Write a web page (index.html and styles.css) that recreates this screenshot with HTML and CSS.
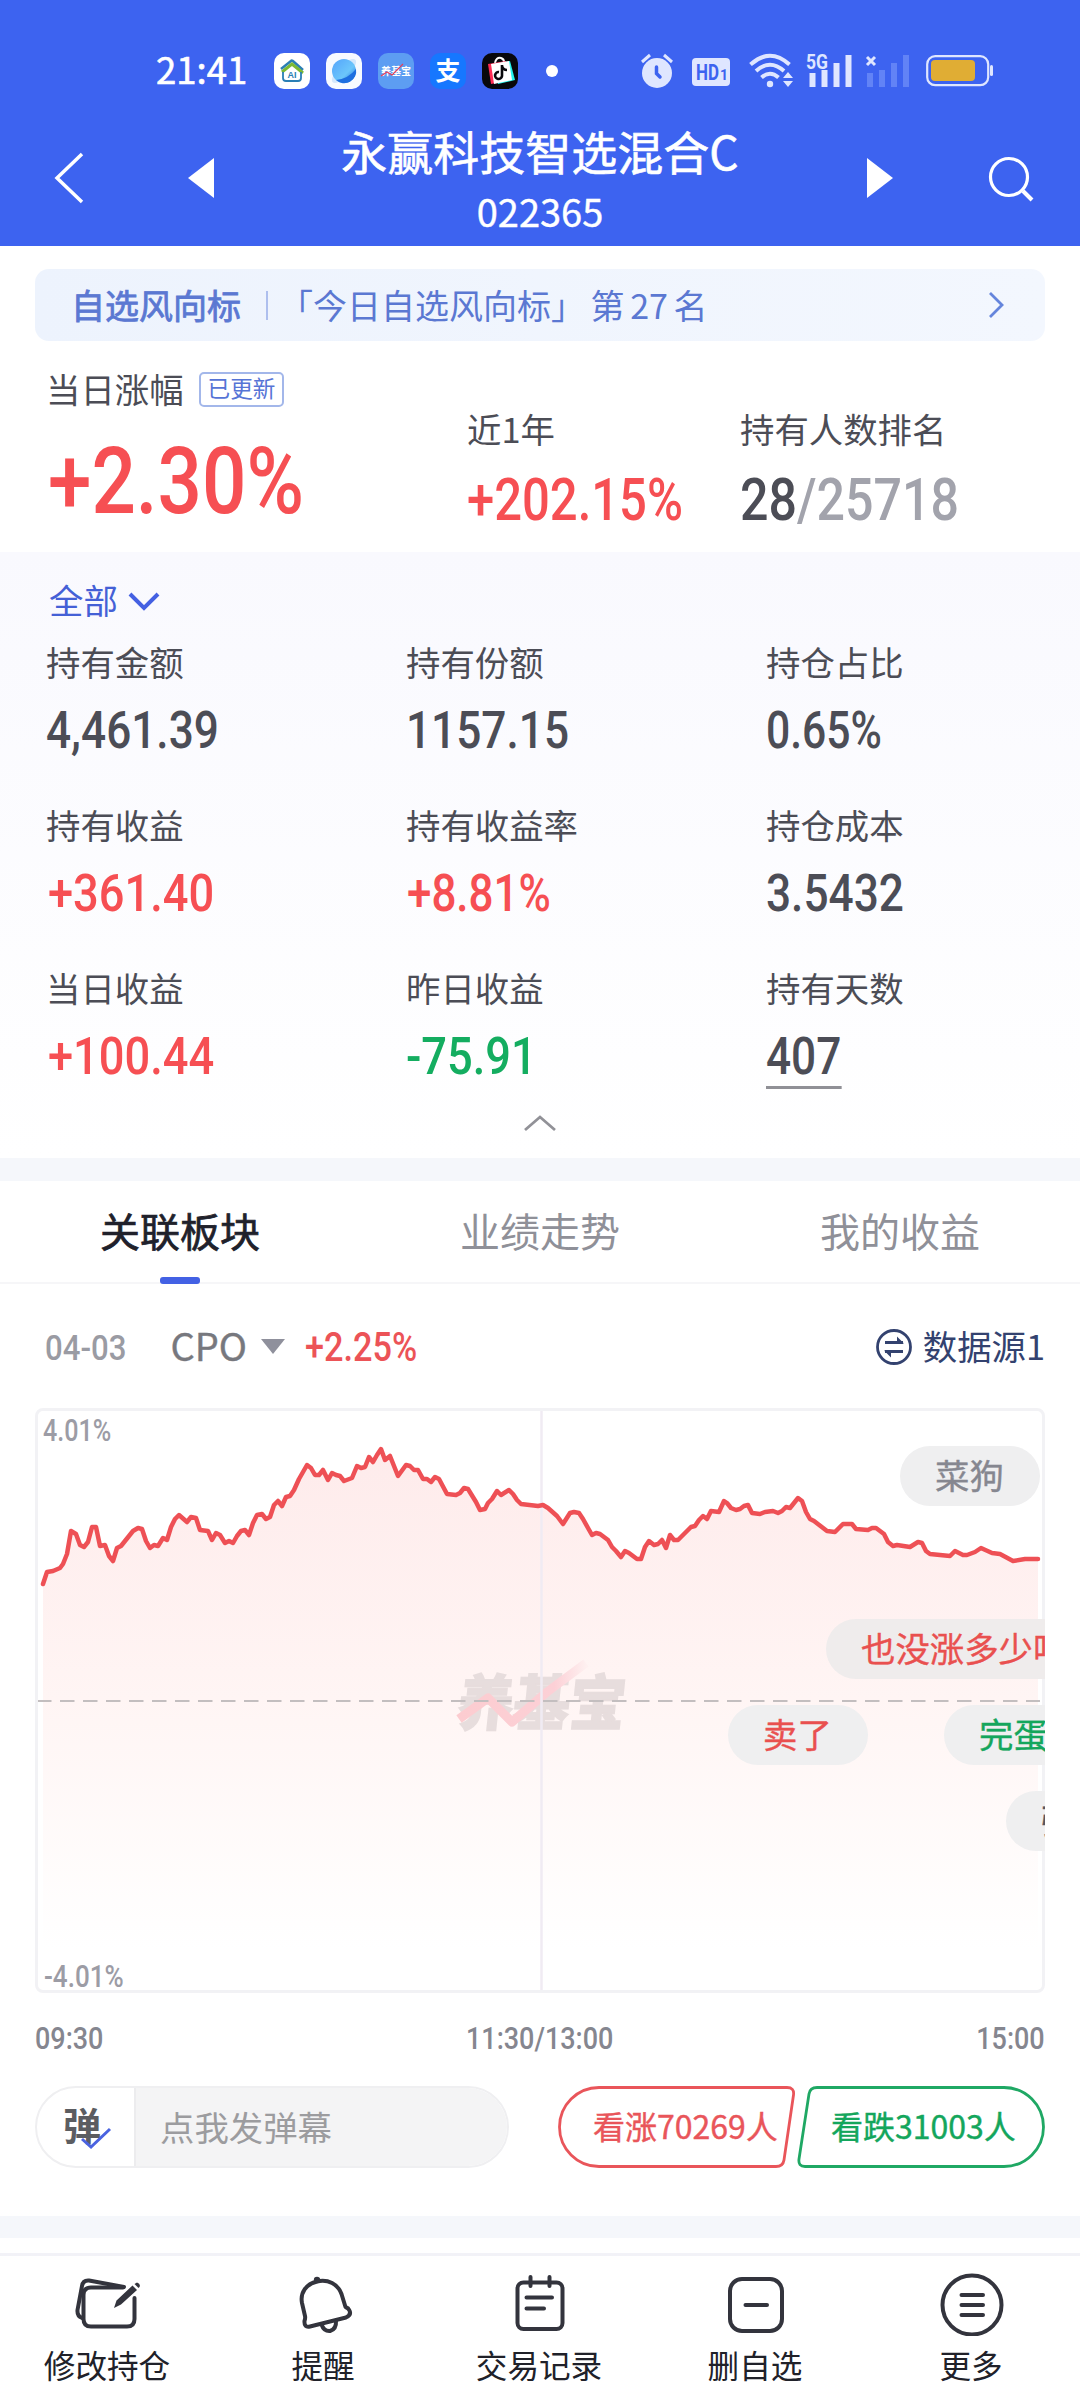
FILE: index.html
```html
<!DOCTYPE html>
<html lang="zh-CN">
<head>
  <meta charset="UTF-8" />
  <meta name="viewport" content="width=device-width, initial-scale=1.0"/>
  <title>永赢科技智选混合C</title>
  <link rel="stylesheet" href="styles.css">
</head>
<body>

  <!-- Header -->
  <header class="header">
    <div class="status-bar">
      <span class="clock">21:41</span>
      <div class="apps">
        <svg width="36" height="36" viewBox="0 0 36 36">
          <rect width="36" height="36" rx="10" fill="#fff"/>
          <path d="M7 16 L17 8 Q18 7 20 9 L29 17" fill="none" stroke="#2b7fb5" stroke-width="2.5"/>
          <path d="M8 19 L18 11 L29 20" fill="none" stroke="#7ab935" stroke-width="3"/>
          <path d="M9 19 V25 Q9 28 12 28 H24 Q27 28 27 25 V19" fill="none" stroke="#2b7fb5" stroke-width="1.8"/>
          <text x="18" y="25" class="app-ai">AI</text>
        </svg>
        <svg width="36" height="36" viewBox="0 0 36 36">
          <defs>
            <linearGradient id="globe" x1="0" y1="0" x2="1" y2="1">
              <stop offset="0" stop-color="#54a4fb"/>
              <stop offset=".6" stop-color="#6cc6fb"/>
              <stop offset="1" stop-color="#1563d8"/>
            </linearGradient>
          </defs>
          <rect width="36" height="36" rx="10" fill="#f7faff"/>
          <ellipse cx="18" cy="18" rx="16" ry="6" fill="#d3e7fc" transform="rotate(-45 18 18)"/>
          <circle cx="18" cy="18" r="12" fill="url(#globe)"/>
          <path d="M30 16 A12 12 0 0 1 10 27 Q22 26 30 16Z" fill="#1d6ee0"/>
        </svg>
        <svg width="36" height="36" viewBox="0 0 36 36">
          <rect width="36" height="36" rx="10" fill="#5d9df2"/>
          <text x="18" y="22" class="app-yjb">养基宝</text>
          <path d="M3 23 L9 19 L14 22 L25 11" fill="none" stroke="#e5405c" stroke-width="1.2"/>
        </svg>
        <svg width="36" height="36" viewBox="0 0 36 36">
          <rect width="36" height="36" rx="10" fill="#1677ff"/>
          <text x="18" y="27" class="app-zfb">支</text>
        </svg>
        <svg width="36" height="36" viewBox="0 0 36 36">
          <rect width="36" height="36" rx="10" fill="#08080c"/>
          <path d="M13 10 Q14 4 19 5 Q22 6 22 9" fill="none" stroke="#fff" stroke-width="2"/>
          <path d="M6 11 L24 8 L25 28 L9 31Z" fill="#fe2c55"/>
          <path d="M13 11 L28 8 L33 27 L16 31Z" fill="#25f4ee"/>
          <path d="M9 11 L27 8 L30 27 L12 31Z" fill="#fff"/>
          <path d="M20 12 V23 a3.5 3.5 0 1 1 -3 -4 M20 13 Q21 17 25 17" fill="none" stroke="#08080c" stroke-width="2.6"/>
        </svg>
      </div>
      <span class="dot"></span>

      <div class="signals">
        <!-- alarm -->
        <svg width="34" height="36" viewBox="0 0 34 36">
          <circle cx="17" cy="20" r="15" fill="#dfe6ff"/>
          <path d="M2 9 L10 2 M32 9 L24 2" stroke="#dfe6ff" stroke-width="3"/>
          <path d="M16.500 14 V20.500 L20 24" fill="none" stroke="#3d63f0" stroke-width="3.500" stroke-linecap="round"/>
        </svg>
        <!-- hd -->
        <svg class="hd" width="40" height="36" viewBox="0 0 40 36">
          <rect x="1" y="5" width="38" height="28" rx="4" fill="#dfe6ff"/>
          <text x="5" y="27" textLength="23" lengthAdjust="spacingAndGlyphs" class="hd-text">HD<tspan class="hd-num"></tspan></text>
          <text x="29" y="27" class="hd-num">1</text>
        </svg>
        <!-- wifi -->
        <svg class="wifi" width="46" height="36" viewBox="0 0 46 36">
          <g fill="none" stroke="#dfe6ff" stroke-width="4">
            <path d="M1.500 11.500 Q21 -6 40.500 11.500"/>
            <path d="M7 18 Q21 5.500 35 18"/>
            <path d="M12.500 24.500 Q21 17 29.500 24.500"/>
          </g>
          <circle cx="21" cy="31" r="3.200" fill="#dfe6ff"/>
          <path d="M34 25 h10 l-5 -6z M34 28 h10 l-5 6z" fill="#dfe6ff"/>
        </svg>
        <!-- 5g -->
        <svg class="sim" width="48" height="36" viewBox="0 0 48 36">
          <text x="0" y="15.500" textLength="22" lengthAdjust="spacingAndGlyphs" class="net">5G</text>
          <path d="M6.500 23 V31 M18.500 20 V31 M30.500 13 V31 M42.500 5 V31" stroke="#dfe6ff" stroke-width="6" stroke-linecap="square"/>
        </svg>
        <!-- empty sim -->
        <svg class="sim-off" width="46" height="36" viewBox="0 0 46 36">
          <path d="M2 4 L10 12 M10 4 L2 12" stroke="#dfe6ff" stroke-width="3"/>
          <path d="M5 23 V31 M17 20 V31 M29 13 V31 M41 5 V31" stroke="#6283f6" stroke-width="6" stroke-linecap="square"/>
        </svg>
        <!-- battery -->
        <svg class="battery" width="68" height="36" viewBox="0 0 68 36">
          <rect x="1.200" y="3.200" width="61" height="29" rx="8" fill="none" stroke="#dfe6ff" stroke-width="2.200"/>
          <rect x="5" y="7" width="44" height="21" rx="4" fill="#e0ad34"/>
          <rect x="64" y="12" width="3" height="11" rx="1.500" fill="#dfe6ff"/>
        </svg>
      </div>
    </div>

    <div class="title-bar">
      <svg class="back" width="40" height="56" viewBox="0 0 40 56" fill="none" stroke="#fff" stroke-width="3.500">
        <path d="M32 4 L7 28 L32 52"/>
      </svg>
      <svg class="prev" width="30" height="44" viewBox="0 0 30 44"><path d="M28 2 V42 L2 22Z" fill="#fff"/></svg>
      <div class="title">
        <h1>永赢科技智选混合C</h1>
        <p>022365</p>
      </div>
      <svg class="next" width="30" height="44" viewBox="0 0 30 44"><path d="M2 2 V42 L28 22Z" fill="#fff"/></svg>
      <svg class="search" width="48" height="48" viewBox="0 0 48 48" fill="none" stroke="#fff" stroke-width="3.200">
        <circle cx="22" cy="22" r="18.500"/>
        <path d="M36 36 L45 45" stroke-width="4"/>
      </svg>
    </div>
  </header>

  <!-- Overview -->
  <section class="overview">
    <div class="banner">
      <span class="banner-name">自选风向标</span>
      <span class="banner-line"></span>
      <span class="banner-text">「今日自选风向标」 第 27 名</span>
      <svg width="18" height="30" viewBox="0 0 18 30" fill="none" stroke="#6585dc" stroke-width="2.800"><path d="M2 3 L14 15 L2 27"/></svg>
    </div>
    <div class="summary">
      <div class="summary-item">
        <div class="label">当日涨幅 <span class="badge">已更新</span></div>
        <div class="num num-big up">+2.30%</div>
      </div>
      <div class="summary-item low">
        <div class="label">近1年</div>
        <div class="num num-mid up">+202.15%</div>
      </div>
      <div class="summary-item low">
        <div class="label">持有人数排名</div>
        <div class="num num-mid rank">28<span>/25718</span></div>
      </div>
    </div>
  </section>

  <!-- Holdings -->
  <section class="holdings">
    <div class="filter">全部
      <svg width="32" height="20" viewBox="0 0 32 20" fill="none" stroke="#4460e2" stroke-width="4"><path d="M2 2 L16 16 L30 2"/></svg>
    </div>
    <div class="grid">
      <div><div class="label">持有金额</div><div class="num">4,461.39</div></div>
      <div><div class="label">持有份额</div><div class="num">1157.15</div></div>
      <div><div class="label">持仓占比</div><div class="num num-pct">0.65%</div></div>
      <div><div class="label">持有收益</div><div class="num up">+361.40</div></div>
      <div><div class="label">持有收益率</div><div class="num num-pct up">+8.81%</div></div>
      <div><div class="label">持仓成本</div><div class="num">3.5432</div></div>
      <div><div class="label">当日收益</div><div class="num up">+100.44</div></div>
      <div><div class="label">昨日收益</div><div class="num down">-75.91</div></div>
      <div><div class="label">持有天数</div><div class="num days">407</div></div>
    </div>
    <svg class="fold" width="34" height="20" viewBox="0 0 34 20" fill="none" stroke="#919197" stroke-width="2.800"><path d="M2 17 L17 4 L32 17"/></svg>
  </section>

  <div class="divider"></div>

  <!-- Tabs -->
  <nav class="tabs">
    <div class="tab active">关联板块</div>
    <div class="tab">业绩走势</div>
    <div class="tab">我的收益</div>
  </nav>

  <!-- Sector chart -->
  <section class="sector">
    <div class="sector-head">
      <span class="date">04-03</span>
      <span class="sector-name">CPO</span>
      <span class="caret"></span>
      <span class="sector-rate">+2.25%</span>
      <span class="source">
        <svg width="38" height="38" viewBox="0 0 38 38" fill="none" stroke="#33426f" stroke-width="2.800">
          <circle cx="19" cy="19" r="16.500"/>
          <path d="M10 14.500 H28 M10 23.500 H28" />
          <path d="M22 8.500 L29 15.500 H22Z M16 29.500 L9 22.500 H16Z" fill="#33426f" stroke="none"/>
        </svg>
        数据源1
      </span>
    </div>

    <div class="chart">
      <svg class="plot" width="1010" height="585" viewBox="0 0 1010 585">
        <defs>
          <linearGradient id="area" gradientUnits="userSpaceOnUse" x1="0" y1="40" x2="0" y2="540">
            <stop offset="0" stop-color="#feebeb"/>
            <stop offset=".5" stop-color="#fff5f4"/>
            <stop offset="1" stop-color="#ffffff"/>
          </linearGradient>
          <linearGradient id="trend" gradientUnits="userSpaceOnUse" x1="424" y1="0" x2="551" y2="0">
            <stop offset="0" stop-color="#fcccd0"/>
            <stop offset=".75" stop-color="#fcd0d6"/>
            <stop offset="1" stop-color="#fef0f0"/>
          </linearGradient>
        </defs>
        <polygon id="area-shape" fill="url(#area)"/>
        <text x="422" y="317" textLength="168" lengthAdjust="spacingAndGlyphs" transform="translate(32 0) skewX(-6)" class="watermark">养基宝</text>
        <path d="M424 311 L453 290 L477 314 L512 284 L551 255" fill="none" stroke="url(#trend)" stroke-width="9" stroke-linejoin="round"/>
        <path d="M506.500 0 V585" stroke="#f0ebf3" stroke-width="2.500"/>
        <path d="M2 293 H1005" stroke="#c3bebf" stroke-width="2" stroke-dasharray="14.500 8.500"/>
        <polyline id="line-shape" fill="none" stroke="#ee5055" stroke-width="4.500" stroke-linejoin="round" stroke-linecap="round"/>
      </svg>
      <div class="frame"></div>
      <span class="axis axis-top">4.01%</span>
      <span class="axis axis-bottom">-4.01%</span>
      <span class="bullet bullet-1">菜狗</span>
      <span class="bullet bullet-2">也没涨多少吧</span>
      <span class="bullet bullet-3">卖了</span>
      <span class="bullet bullet-4">完蛋了</span>
      <span class="bullet bullet-5">强</span>
    </div>

    <div class="times">
      <span>09:30</span>
      <span>11:30/13:00</span>
      <span>15:00</span>
    </div>

    <div class="actions">
      <div class="comment">
        <div class="comment-toggle">弹
          <svg width="32" height="24" viewBox="0 0 32 24" fill="none" stroke="#4a63e0" stroke-width="3"><path d="M2 12 L11 20 L30 2"/></svg>
        </div>
        <div class="comment-input">点我发弹幕</div>
      </div>
      <div class="vote vote-up">
        <svg width="239" height="82" viewBox="0 0 239 82" fill="none" stroke="#e9555a" stroke-width="2.800"><path d="M41 1.500 H229 Q236.500 1.500 235.500 9 L226 74 Q225 80.500 218 80.500 H41 A39.500 39.500 0 0 1 41 1.500Z"/></svg>
        <span>看涨70269人</span>
      </div>
      <div class="vote vote-down">
        <svg width="248" height="82" viewBox="0 0 248 82" fill="none" stroke="#1fa864" stroke-width="2.800"><path d="M207 1.500 H20 Q13 1.500 12 8 L2 73 Q1 80.500 8 80.500 H207 A39.500 39.500 0 0 0 207 1.500Z"/></svg>
        <span>看跌31003人</span>
      </div>
    </div>
  </section>

  <div class="divider divider-bottom"></div>

  <!-- Bottom toolbar -->
  <nav class="toolbar">
    <div class="tool">
      <svg width="70" height="64" viewBox="0 0 70 64">
        <path d="M50 15.500 H18 Q10.500 15.500 10.500 23 V47 Q10.500 54.500 18 54.500 H54 Q61.500 54.500 61.500 47 V26"/>
        <path d="M51 15 L16 8.500 Q10 8 9 14 L4.500 38 Q4 44 9 46"/>
        <path d="M41 36 L43.500 28.500 L59.500 13.500 L64 18 L48 32.500Z M61.500 12 L64 10.500 Q68 12 66.500 15 L65.500 16Z" class="solid"/>
      </svg>
      <span>修改持仓</span>
    </div>
    <div class="tool">
      <svg width="70" height="64" viewBox="0 0 70 64">
        <path d="M28 9.500 C17 12 11 21 13 31 L16 44 Q16.500 46 15.500 49 Q15 56 21 54.500 L57 45.500 Q62.500 43 60.500 38.500 Q59.500 36 56.500 35 L52.500 22 C49 12 39 7 28 9.500Z"/>
        <path d="M32.500 52.500 Q35 59.500 41 59 Q47.500 57 47 49"/>
        <circle cx="28" cy="8" r="3.200" class="solid"/>
      </svg>
      <span>提醒</span>
    </div>
    <div class="tool">
      <svg width="70" height="64" viewBox="0 0 70 64">
        <rect x="12.500" y="10.500" width="45" height="46.500" rx="6"/>
        <path d="M25.500 5 V14 M44.500 5 V14 M21.500 25.500 H47 M21.500 36.500 H39"/>
      </svg>
      <span>交易记录</span>
    </div>
    <div class="tool">
      <svg width="70" height="64" viewBox="0 0 70 64">
        <rect x="9" y="7" width="52" height="52" rx="12"/>
        <path d="M24.500 33 H46"/>
      </svg>
      <span>删自选</span>
    </div>
    <div class="tool">
      <svg width="70" height="64" viewBox="0 0 70 64">
        <circle cx="35" cy="33" r="29.500"/>
        <path d="M24.500 23 H46 M24.500 33 H46 M24.500 43 H46"/>
      </svg>
      <span>更多</span>
    </div>
  </nav>

  <script src="chart.js"></script>
</body>
</html>
```
FILE: styles.css
```css
* { box-sizing: border-box; }
body { margin: 0; width: 1080px; height: 2400px; overflow: hidden; background: #fff; color: #4c4d56; font-family: "Noto Sans CJK SC", sans-serif; font-size: 34.4px; }
h1, p { margin: 0; font-weight: 400; }
svg { display: block; flex: none; }

/* header */
.header { height: 246px; background: #3d63f0; color: #fff; }
.status-bar { display: flex; align-items: center; height: 106px; padding: 36px 0 0 156px; }
.clock { width: 118px; font-size: 36.5px; line-height: 36px; margin-top: -5px; -webkit-text-stroke: 0.6px #fff; }
.apps { display: flex; gap: 16px; }
.dot { width: 12px; height: 12px; margin-left: 28px; border-radius: 50%; background: #fff; }
.signals { display: flex; margin-left: 82px; }
.hd { margin-left: 17px; }
.wifi { margin-left: 18px; }
.sim { margin-left: 11px; }
.sim-off { margin-left: 11px; }
.battery { margin-left: 15px; }
.app-ai { font: bold 9px "Liberation Sans", sans-serif; fill: #2b7fb5; text-anchor: middle; }
.app-yjb { font: bold 10px "Noto Sans CJK SC", sans-serif; fill: #fff; text-anchor: middle; }
.app-zfb { font: bold 25px "Noto Sans CJK SC", sans-serif; fill: #fff; text-anchor: middle; }
.hd-text { font: bold 22px Roboto, sans-serif; fill: #3d63f0; }
.hd-num { font: bold 14px Roboto, sans-serif; fill: #3d63f0; }
.net { font: bold 20px Roboto, sans-serif; fill: #dfe6ff; }
.title-bar { display: flex; height: 140px; padding: 0 45px 0 50px; }
.back { margin-top: 44px; }
.prev { margin: 50px 0 0 96px; }
.next { margin-top: 50px; }
.search { margin: 49px 0 0 92px; }
.title { flex: 1; padding: 14px 1px 0 0; text-align: center; }
.title h1 { font-size: 46px; line-height: 60px; -webkit-text-stroke: 0.6px #fff; }
.title p { margin-top: 6px; font-size: 38px; line-height: 50px; -webkit-text-stroke: 0.4px #fff; }

/* numbers */
.num { width: max-content; font-family: Roboto, sans-serif; font-weight: 500; font-size: 52px; line-height: 60px; transform: scaleX(0.85); transform-origin: left; }
.num.up { transform: translateX(2px) scaleX(0.87); }
.num.num-big { font-size: 92px; line-height: 80px; transform: translateX(2px) scaleX(0.85); }
.num.num-mid { font-size: 59px; transform: scaleX(0.83); }
.num.num-pct { transform: scaleX(0.82); }
.num.num-pct.up { transform: translateX(1px) scaleX(0.845); }
.up { color: #f64f53; }
.down { color: #14ad60; }
.num.down { transform: scaleX(0.87); }
.label { line-height: 40px; white-space: nowrap; }

/* overview */
.overview { height: 306px; padding: 23px 35px 0; }
.banner { display: flex; align-items: center; height: 72px; padding: 0 39px 0 36px; border-radius: 14px; background: linear-gradient(90deg, #edf3fd, #f3f7fe); color: #5b78d2; font-size: 34px; line-height: 40px; }
.banner span { margin-top: -1px; }
.banner-name { -webkit-text-stroke: 0.8px #5b78d2; }
.banner .banner-line { width: 2px; height: 29px; margin: 0 11px 0 25px; background: #aebfee; }
.banner-text { flex: 1; white-space: pre; word-spacing: -2px; }
.summary { display: grid; grid-template-columns: 421px 273px 1fr; padding: 27px 0 0 11px; }
.summary-item .num { margin-top: 34px; }
.low { padding-top: 40px; }
.low .num { margin-top: 22px; }
.summary-item .label { display: flex; align-items: center; }
.badge { height: 35px; margin: 2px 0 0 15px; padding: 0 7px; border: 2px solid #a3b7ea; border-radius: 5px; color: #5674d6; font-size: 22.6px; line-height: 28px; }
.num.rank { transform: scaleX(0.85); }
.rank span { color: #a2a3ac; }

/* holdings */
.holdings { height: 606px; padding-top: 27px; background: linear-gradient(#f9f9fe, #fff); }
.filter { display: flex; align-items: center; gap: 10px; padding-left: 49px; line-height: 40px; color: #4460d6; }
.filter svg { margin-top: 6px; }
.grid { display: grid; grid-template-columns: repeat(3, 360px); grid-auto-rows: 119px; row-gap: 44px; margin-top: 22px; padding-left: 46px; }
.grid .num { margin-top: 20px; }
.grid .days { line-height: 59px; border-bottom: 3px solid #909096; }
.fold { margin: 27px auto 0; }

.divider { height: 23px; background: #f5f7fb; }
.divider-bottom { height: 22px; }

/* tabs */
.tabs { display: flex; height: 103px; border-bottom: 2px solid #f6f6f8; }
.tab { flex: 1; padding-top: 24px; text-align: center; font-size: 40px; line-height: 50px; color: #8f9098; }
.tab.active { color: #20212b; -webkit-text-stroke: 0.7px #20212b; }
.tab.active::after { content: ""; display: block; width: 40px; height: 7px; margin: 22px auto 0; border-radius: 3px; background: #4361e4; }

/* sector */
.sector { height: 932px; padding: 0 35px; }
.sector-head { display: flex; align-items: center; height: 124px; padding-left: 10px; }
.date { font: 500 35px Roboto, sans-serif; color: #9a9ba3; transform: scaleX(0.89); transform-origin: left; margin-top: 5px; }
.sector-name { margin: -3px 0 0 34px; font-size: 38px; line-height: 50px; color: #77787e; -webkit-text-stroke: 0.4px #77787e; }
.caret { margin-left: 14px; border: 12px solid transparent; border-top: 15px solid #8f909c; border-bottom: 0; }
.sector-rate { margin: 1px 0 0 20px; font: 500 41px Roboto, sans-serif; color: #ec5357; transform: scaleX(0.835); transform-origin: left; }
.source { display: flex; align-items: center; gap: 10px; margin: -2px 0 0 auto; line-height: 40px; color: #33426f; }
.source svg { margin-top: 3px; }

.chart { position: relative; height: 585px; overflow: hidden; }
.frame { position: absolute; inset: 0; border: 3px solid #f2f2f5; border-radius: 8px; }
.watermark { font: 900 60px "Noto Sans CJK SC", sans-serif; fill: #e7dddd; stroke: #e7dddd; stroke-width: 1.5px; }
.axis { position: absolute; left: 8px; font: 500 31px/36px Roboto, sans-serif; color: #9c9ca5; transform: scaleX(0.81); transform-origin: left; }
.axis-top { top: 5px; }
.axis-bottom { bottom: 0; line-height: 32px; transform: translateX(1px) scaleX(0.84); }
.bullet { position: absolute; height: 60px; padding: 0 36px 0 35px; border-radius: 30px; background: #efeff0; line-height: 57px; white-space: nowrap; -webkit-text-stroke: 0.4px; }
.bullet-1 { left: 865px; top: 38px; color: #868790; }
.bullet-2 { left: 791px; top: 211px; color: #e9504f; background: #efecec; }
.bullet-3 { left: 693px; top: 297px; color: #e9504f; }
.bullet-4 { left: 909px; top: 297px; color: #14a65c; }
.bullet-5 { left: 971px; top: 383px; color: #55565f; }

.times { display: flex; justify-content: space-between; margin-top: 26px; font: 500 31px/40px Roboto, sans-serif; color: #85868f; }
.times span { transform: scaleX(0.87); }
.times span:first-child { transform-origin: left; }
.times span:last-child { transform-origin: right; }

.actions { display: flex; margin-top: 27px; }
.comment { display: flex; width: 474px; height: 82px; border: 2px solid #efeff1; border-radius: 41px; overflow: hidden; }
.comment-toggle { position: relative; width: 99px; padding-left: 26px; border-right: 2px solid #ececee; color: #5c5d61; font-size: 38px; font-weight: bold; line-height: 72px; }
.comment-toggle svg { position: absolute; left: 43px; top: 39px; }
.comment-input { flex: 1; padding-left: 24px; background: #f4f4f5; color: #9c9c9f; line-height: 76px; }
.vote { position: relative; height: 82px; }
.vote span { position: absolute; inset: 0; font-size: 32px; line-height: 79px; white-space: nowrap; -webkit-text-stroke: 0.4px; }
.vote-up { margin-left: 49px; color: #e9555a; }
.vote-up span { padding-left: 35px; }
.vote-down { color: #14a65c; }
.vote-down span { padding-left: 34px; }

/* toolbar */
.toolbar { display: flex; height: 147px; margin-top: 15px; padding-top: 16px; border-top: 3px solid #f2f2f7; }
.tool { flex: 1; display: flex; flex-direction: column; align-items: center; gap: 8px; color: #202129; font-size: 31.6px; line-height: 40px; }
.tool span { margin-right: 2px; }
.tool svg { fill: none; stroke: #33343d; stroke-width: 4; stroke-linecap: round; stroke-linejoin: round; }
.tool .solid { fill: #33343d; stroke: none; }
```
FILE: chart.js
```js
// x,y pairs of the intraday line
const points = `8,176 12,164 18,163 25,160 28,156 32,146 36,123 41,126 45,137 49,139 53,134 57,119 61,119
65,138 70,137 74,148 78,153 82,140 86,138 98,123 103,120 107,121 111,133 115,140 119,137 123,138 128,130
132,132 136,119 140,111 144,107 152,114 156,109 161,110 165,122 173,123 177,132 181,125 185,127 190,135
194,133 198,135 202,128 206,123 210,122 214,127 218,115 222,107 227,106 231,111 235,109 239,97 243,93
247,98 251,89 255,88 259,82 264,71 272,57 276,60 280,67 284,67 288,62 293,72 297,65 301,67 305,68 309,73
317,70 322,58 326,60 330,59 334,49 338,54 342,47 346,41 350,52 355,48 363,68 371,57 375,58 379,62 383,62
388,71 392,71 396,74 400,69 404,71 412,86 421,87 425,85 429,80 433,81 441,94 445,102 450,101 453,95 457,91
462,83 466,87 474,82 478,86 482,92 486,96 503,98 508,97 513,100 522,108 528,116 535,105 539,104 544,105
548,111 553,120 557,127 561,125 565,126 573,132 577,139 581,143 586,149 590,143 594,145 602,151 606,151
610,139 614,133 619,137 623,136 627,132 631,140 635,127 639,132 643,132 656,119 660,118 664,112 668,108
672,111 676,103 684,104 689,93 692,95 696,100 701,102 705,101 709,98 713,97 717,105 725,106 730,104
738,103 743,105 747,103 751,99 755,100 763,90 767,93 771,104 775,111 779,113 792,123 800,124 808,116
817,116 821,121 833,122 837,120 841,120 849,126 853,134 858,138 862,137 875,139 883,134 887,135 891,143
895,146 915,148 920,143 928,147 932,147 940,144 946,140 957,145 965,146 978,153 990,151 1003,151`;

document.getElementById("line-shape").setAttribute("points", points);
document.getElementById("area-shape").setAttribute("points", "8,582 " + points + " 1003,582");
```
